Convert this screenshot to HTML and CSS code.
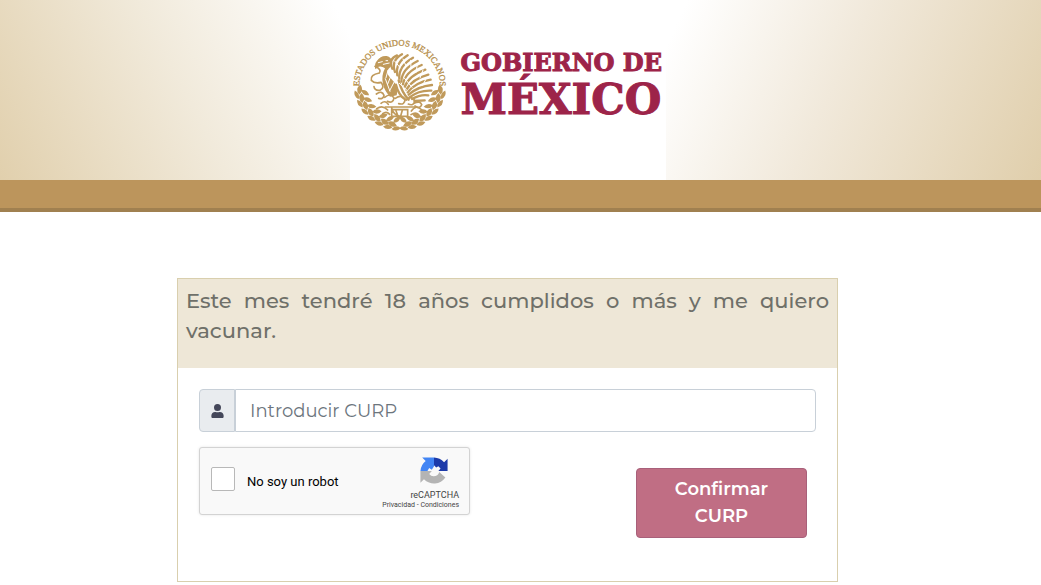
FILE: index.html
```html
<!DOCTYPE html>
<html lang="es">

<head>
    <meta charset="UTF-8">
    <meta name="viewport" content="width=device-width, initial-scale=1.0">
    <link rel="stylesheet" href="styles.css">
    <title>Gobierno de México</title>
</head>

<body>
    <header class="header">
        <div class="logo">
            <svg class="escudo" viewBox="0 0 330 330" aria-hidden="true">
                <defs>
                    <path id="arco" d="M40 168 A121 121 0 0 1 282 168" />
                    <g id="hoja">
                        <path d="M280 150 q20 10 7 29 q-17 -12 -7 -29z" />
                        <path d="M280 166 q-19 -1 -22 18 q20 1 22 -18z" />
                        <path d="M299 165 q8 16 -8 27 q-9 -15 8 -27z" />
                    </g>
                </defs>
                <text class="lema"><textPath href="#arco" startOffset="50%">ESTADOS UNIDOS MEXICANOS</textPath></text>
                <!-- laurel -->
                <g class="oro">
                    <use href="#hoja" transform="rotate(7 162 162)" />
                    <use href="#hoja" transform="rotate(19 162 162)" />
                    <use href="#hoja" transform="rotate(31 162 162)" />
                    <use href="#hoja" transform="rotate(43 162 162)" />
                    <use href="#hoja" transform="rotate(55 162 162)" />
                    <use href="#hoja" transform="rotate(67 162 162)" />
                    <use href="#hoja" transform="rotate(78 162 162)" />
                </g>
                <g class="oro" transform="translate(324 0) scale(-1 1)">
                    <use href="#hoja" transform="rotate(7 162 162)" />
                    <use href="#hoja" transform="rotate(19 162 162)" />
                    <use href="#hoja" transform="rotate(31 162 162)" />
                    <use href="#hoja" transform="rotate(43 162 162)" />
                    <use href="#hoja" transform="rotate(55 162 162)" />
                    <use href="#hoja" transform="rotate(67 162 162)" />
                    <use href="#hoja" transform="rotate(78 162 162)" />
                </g>
                <!-- aguila -->
                <path class="oro" d="M93 92 Q104 76 122 78 Q137 81 139 98 Q138 109 128 116 Q119 126 129 139 L146 158 Q158 175 152 196 L132 200 Q116 184 111 163 Q105 137 117 115 Q108 108 98 110 L88 118 Q84 101 93 92z" />
                <path class="hueco" d="M97 98 l12 -3 M120 92 h5 M126 121 l-6 22 M134 140 l-9 22 M144 157 l-13 25 M118 146 l14 38 M112 103 l18 -4" />
                <g class="pluma">
                    <path d="M139 116 Q126 87 153 76" />
                    <path d="M147 126 Q134 92 168 73" />
                    <path d="M154 136 Q147 99 185 76" />
                    <path d="M160 146 Q157 108 201 83" />
                    <path d="M166 155 Q167 117 215 93" />
                    <path d="M171 163 Q177 126 227 105" />
                    <path d="M176 171 Q188 137 238 119" />
                    <path d="M181 179 Q199 147 247 134" />
                    <path d="M185 187 Q209 157 254 149" />
                    <path d="M188 194 Q216 169 258 165" />
                    <path d="M190 202 Q220 180 256 182" />
                    <path d="M198 207 Q224 192 247 196" />
                    <path d="M158 151 Q168 189 188 209" />
                    <path d="M150 164 Q157 194 177 208" />
                    <path d="M205 213 L236 211" />
                </g>
                <path class="hueco" d="M146 93 l17 21 M171 87 l9 21 M194 91 l1 22 M214 103 l-4 24 M231 120 l-9 24 M242 143 l-12 23 M174 143 l24 29 M160 160 l24 22" />
                <!-- serpiente y nopal -->
                <path class="cuerpo" d="M87 109 Q108 118 100 129 Q72 134 76 151 Q86 162 105 157 Q118 172 102 181 Q86 183 84 170" />
                <g class="cuerpo">
                    <path d="M91 192 q17 -12 23 4 q-3 13 -16 9 M116 202 q18 -15 28 2 q-3 18 -20 10 M148 205 q17 -13 29 2 q0 19 -19 14 M181 210 q18 -15 26 3 q-5 16 -20 9" />
                    <path d="M105 220 q13 -11 22 3 M204 220 q18 -9 23 4 q-5 14 -20 4" />
                    <path d="M118 231 h88 M137 234 q6 22 24 24 M137 239 h48 v20 h-48z M150 242 l5 14 M169 241 l-5 17" />
                    <path d="M92 236 q18 -13 33 4 M196 243 q14 -21 32 -3 M110 251 q11 -9 21 2 M195 254 q14 -9 23 0" />
                </g>
            </svg>
            <h1 class="nombre">
                <span class="gobierno">GOBIERNO DE</span>
                <span class="mexico">MÉXICO</span>
            </h1>
        </div>
    </header>

    <main class="container">
        <div class="card">
            <h2 class="card-title">Este mes tendré 18 años cumplidos o más y me quiero vacunar.</h2>
            <form class="card-body" action="">
                <div class="input-group">
                    <label class="addon" for="curp" aria-label="CURP">
                        <svg class="user" viewBox="0 0 448 512" aria-hidden="true">
                            <path d="M224 256a128 128 0 1 0 0-256 128 128 0 0 0 0 256zm90 32h-17a174 174 0 0 1-146 0h-17C60 288 0 348 0 422v42c0 27 21 48 48 48h352c27 0 48-21 48-48v-42c0-74-60-134-134-134z" />
                        </svg>
                    </label>
                    <input type="text" id="curp" class="curp" placeholder="Introducir CURP">
                </div>
                <div class="row">
                    <div class="captcha">
                        <input type="checkbox" id="robot" class="check">
                        <label for="robot" class="robot">No soy un robot</label>
                        <div class="recaptcha">
                            <svg class="recaptcha-logo" viewBox="0 0 64 64" aria-hidden="true">
                                <path fill="#1c3aa9" d="M63 32V4l-8 8A32 32 0 0 0 32 1v18l5 5 5-3 5 5-5 6z" />
                                <path fill="#4285f4" d="M32 1H5l8 8A32 32 0 0 0 1 32h16l4-7 6 4 5-8z" />
                                <path fill="#b4b4b4" d="M1 32v27l8-8a32 32 0 0 0 49-4L44 34q-3 10-13 10-6 0-10-5l6-7z" />
                            </svg>
                            <span class="marca">reCAPTCHA</span>
                            <span class="legal"><a href="#">Privacidad</a> - <a href="#">Condiciones</a></span>
                        </div>
                    </div>
                    <button type="submit" class="confirmar">Confirmar CURP</button>
                </div>
            </form>
        </div>
    </main>
</body>

</html>
```
FILE: styles.css
```css
* {
    margin: 0;
    padding: 0;
    box-sizing: border-box;
}

body {
    background-color: #fff;
    font-family: 'Montserrat', 'Inter', sans-serif;
}

.header {
    display: flex;
    justify-content: center;
    padding: 0 26px 28px 0;
    border-bottom: 4px solid #a08050;
    background:
        linear-gradient(#bc955c, #bc955c) bottom / 100% 28px no-repeat,
        linear-gradient(63deg, #e0ceaa, #f1eadb 39%, #fff 70%) left / 50% 100% no-repeat,
        linear-gradient(295deg, #dfcda9, #f1e9db 43%, #fff 73%) right / 50% 100% no-repeat;
}

.logo {
    display: flex;
    align-items: flex-start;
    width: 316px;
    height: 180px;
    padding-top: 30px;
    background-color: #fff;
}

.escudo {
    flex: none;
    width: 110px;
    height: 110px;
    margin-left: -4px;
}

.lema {
    font-family: 'Liberation Serif', serif;
    font-size: 26px;
    text-anchor: middle;
    fill: #b8924f;
    stroke: #b8924f;
}

.oro {
    fill: #c09a5b;
}

.hueco,
.pluma,
.cuerpo {
    fill: none;
    stroke: #c09a5b;
    stroke-width: 3;
    stroke-linecap: round;
}

.hueco {
    stroke: #fff;
}

.pluma {
    stroke-width: 7;
}

.cuerpo {
    stroke-width: 5;
}

.nombre {
    display: flex;
    flex-direction: column;
    padding: 18px 0 0 5px;
    font-family: 'DejaVu Serif', serif;
    font-weight: bold;
    color: #9d2449;
    white-space: nowrap;
    -webkit-text-stroke: 1px #9d2449;
}

.gobierno {
    font-size: 24px;
    line-height: 30px;
}

.mexico {
    font-size: 42px;
    line-height: 44px;
}

.container {
    display: flex;
    justify-content: center;
    padding: 66px 26px 0 0;
}

.card {
    width: 92%;
    max-width: 661px;
    border: 1px solid #d9cfae;
}

.card-title {
    padding: 7px 8px 22px;
    background-color: #eee7d7;
    color: #6f7069;
    font-size: 21px;
    font-weight: 500;
    line-height: 30px;
    text-align: justify;
}

.card-body {
    padding: 21px 21px 43px;
}

.input-group {
    display: flex;
    height: 43px;
}

.addon {
    display: flex;
    align-items: center;
    justify-content: center;
    width: 36px;
    border: 1px solid #c8d0d8;
    border-radius: 4px 0 0 4px;
    background-color: #e9ecef;
}

.user {
    width: 13px;
    height: 14px;
    fill: #44475a;
}

.curp {
    flex: 1;
    min-width: 0;
    padding: 0 14px;
    border: 1px solid #c8d0d8;
    border-radius: 0 4px 4px 0;
    font-family: inherit;
    font-size: 18px;
    color: #495057;
}

.curp::placeholder {
    color: #6c757d;
}

.row {
    display: flex;
    justify-content: space-between;
    align-items: flex-start;
    padding: 15px 9px 0 0;
}

.captcha {
    display: flex;
    align-items: center;
    width: 271px;
    height: 68px;
    padding: 0 10px 0 11px;
    border: 1px solid #d3d3d3;
    border-radius: 3px;
    background-color: #f9f9f9;
    box-shadow: 0 0 3px rgba(0, 0, 0, 0.1);
    font-family: Roboto, sans-serif;
}

.check {
    appearance: none;
    width: 24px;
    height: 24px;
    margin-top: -4px;
    border: 1px solid #b8b8b8;
    border-radius: 2px;
    background-color: #fff;
}

.robot {
    margin-left: 12px;
    font-size: 13px;
    color: #000;
}

.recaptcha {
    display: flex;
    flex-direction: column;
    align-items: flex-end;
    margin-left: auto;
    padding-top: 3px;
    color: #444;
}

.recaptcha-logo {
    width: 28px;
    height: 28px;
    margin-right: 11px;
}

.marca {
    margin-top: 4px;
    font-size: 9px;
    line-height: 12px;
}

.legal {
    font-size: 7px;
    line-height: 8px;
}

.legal a {
    color: inherit;
    text-decoration: none;
}

.confirmar {
    width: 171px;
    margin-top: 21px;
    padding: 7px 24px;
    border: 1px solid #a8607a;
    border-radius: 4px;
    background-color: #c06e84;
    color: #fff;
    font-family: inherit;
    font-size: 18px;
    font-weight: 600;
    line-height: 27px;
    cursor: pointer;
}

@media (max-width: 768px) {
    .header,
    .container {
        padding-right: 0;
    }

    .row {
        flex-direction: column;
    }
}
```
